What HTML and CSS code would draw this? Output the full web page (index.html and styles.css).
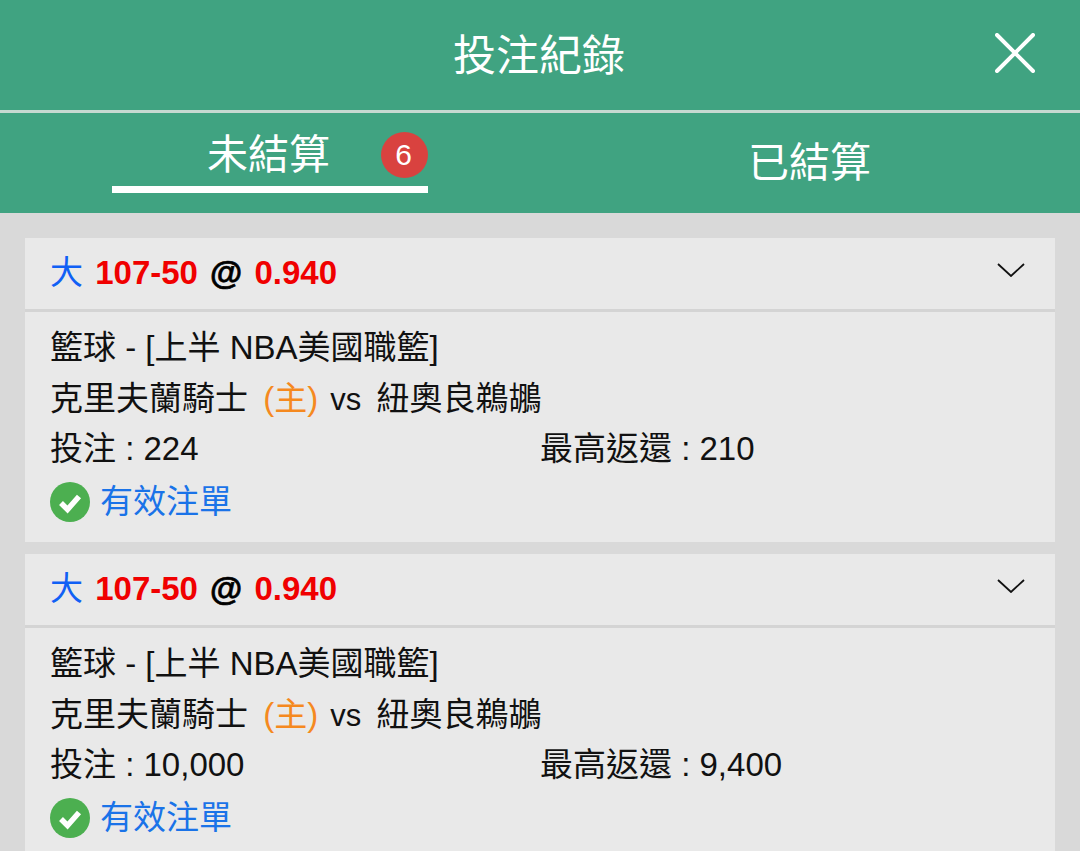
FILE: index.html
```html
<!DOCTYPE html>
<html lang="zh-Hant">
<head>
    <meta charset="UTF-8">
    <meta name="viewport" content="width=device-width, initial-scale=1.0">
    <title>投注紀錄</title>
    <link rel="stylesheet" href="styles.css">
</head>
<body>

    <header class="top-bar">
        <h1>投注紀錄</h1>
        <svg class="close-btn" width="40" height="40" viewBox="0 0 40 40">
            <path d="M2 2 L38 38 M38 2 L2 38" stroke="#fff" stroke-width="4" stroke-linecap="round" fill="none"/>
        </svg>
    </header>

    <nav class="tabs">
        <div class="tab-col">
            <div class="tab active">
                <span>未結算</span>
                <span class="badge">6</span>
            </div>
        </div>
        <div class="tab-col">
            <div class="tab">已結算</div>
        </div>
    </nav>

    <main class="bet-list">
        <section class="bet-card">
            <div class="bet-head">
                <div class="bet-title"><span class="blue">大</span> <span class="red">107-50</span> <span class="at">@</span> <span class="red">0.940</span></div>
                <svg class="chevron" width="28" height="14" viewBox="0 0 28 14">
                    <path d="M1 1 L14 13 L27 1" stroke="#111" stroke-width="1.8" fill="none"/>
                </svg>
            </div>
            <div class="bet-body">
                <div class="line">籃球 - [上半 NBA美國職籃]</div>
                <div class="line">克里夫蘭騎士 <span class="orange">(主)</span> <span class="vs">vs</span> 紐奧良鵜鶘</div>
                <div class="line amounts">
                    <span class="stake">投注 : 224</span>
                    <span>最高返還 : 210</span>
                </div>
                <div class="line status">
                    <svg width="40" height="40" viewBox="0 0 40 40">
                        <circle cx="20" cy="20" r="20" fill="#4caf50"/>
                        <path d="M11 21 L17.5 27.5 L29 14.5" stroke="#fff" stroke-width="5.5" fill="none"/>
                    </svg>
                    <span class="blue-text">有效注單</span>
                </div>
            </div>
        </section>

        <section class="bet-card">
            <div class="bet-head">
                <div class="bet-title"><span class="blue">大</span> <span class="red">107-50</span> <span class="at">@</span> <span class="red">0.940</span></div>
                <svg class="chevron" width="28" height="14" viewBox="0 0 28 14">
                    <path d="M1 1 L14 13 L27 1" stroke="#111" stroke-width="1.8" fill="none"/>
                </svg>
            </div>
            <div class="bet-body">
                <div class="line">籃球 - [上半 NBA美國職籃]</div>
                <div class="line">克里夫蘭騎士 <span class="orange">(主)</span> <span class="vs">vs</span> 紐奧良鵜鶘</div>
                <div class="line amounts">
                    <span class="stake">投注 : 10,000</span>
                    <span>最高返還 : 9,400</span>
                </div>
                <div class="line status">
                    <svg width="40" height="40" viewBox="0 0 40 40">
                        <circle cx="20" cy="20" r="20" fill="#4caf50"/>
                        <path d="M11 21 L17.5 27.5 L29 14.5" stroke="#fff" stroke-width="5.5" fill="none"/>
                    </svg>
                    <span class="blue-text">有效注單</span>
                </div>
            </div>
        </section>
    </main>

</body>
</html>
```

FILE: styles.css
```css
html, body {
    height: 851px;
    overflow: hidden;
}

body {
    font-family: "Liberation Sans", "Noto Sans CJK TC", sans-serif;
    background-color: #d9d9d9;
    margin: 0;
    color: #111;
}

.top-bar {
    height: 110px;
    background-color: #40a381;
    display: flex;
    align-items: center;
    justify-content: center;
    position: relative;
    border-bottom: 3px solid #c6d9d1;
}

.top-bar h1 {
    margin: -7px 2px 0 0;
    font-size: 43px;
    font-weight: 400;
    color: #fff;
}

.close-btn {
    position: absolute;
    right: 45px;
    top: 33px;
}

.tabs {
    height: 100px;
    background-color: #40a381;
    display: flex;
    padding-left: 112px;
    color: #fff;
    font-size: 41px;
}

.tab-col:first-child {
    width: 316px;
}

.tab-col:last-child {
    margin-left: 320px;
    padding-top: 27px;
    line-height: 46px;
}

.tab.active {
    border-bottom: 7px solid #fff;
    display: flex;
    align-items: flex-start;
    padding-left: 95px;
    padding-top: 19px;
    height: 54px;
    line-height: 46px;
    position: relative;
}

.badge {
    position: absolute;
    right: 0;
    top: 19px;
    width: 47px;
    height: 46px;
    border-radius: 50%;
    background-color: #d9423f;
    font-size: 30px;
    line-height: 46px;
    text-align: center;
    text-indent: -2px;
}

.bet-list {
    padding: 25px 25px 0;
}

.bet-card {
    background-color: #e9e9e9;
    margin-bottom: 12px;
}

.bet-head {
    height: 71px;
    display: flex;
    align-items: center;
    justify-content: space-between;
    padding: 0 30px 0 25px;
    border-bottom: 3px solid #d4d4d4;
}

.bet-title {
    font-size: 33px;
    font-weight: bold;
    margin-bottom: 8px;
    word-spacing: 3px;
    color: #000;
}

.blue {
    color: #1060f5;
    font-weight: 400;
}

.red {
    color: #f00000;
}

.at {
    -webkit-text-stroke: 0.7px #000;
}

.chevron {
    margin-top: -8px;
}

.bet-body {
    padding: 10px 25px 15px;
    font-size: 33px;
}

.line {
    height: 51px;
    line-height: 51px;
    white-space: nowrap;
}

.orange {
    color: #f5891f;
    margin: 0 3px 0 6px;
}

.vs {
    font-size: 31px;
    margin-right: 6px;
}

.amounts {
    display: flex;
    line-height: 49px;
}

.stake {
    width: 490px;
}

.status {
    display: flex;
    align-items: center;
    gap: 10px;
    margin-top: 1px;
}

.blue-text {
    color: #1a73e8;
}
```
